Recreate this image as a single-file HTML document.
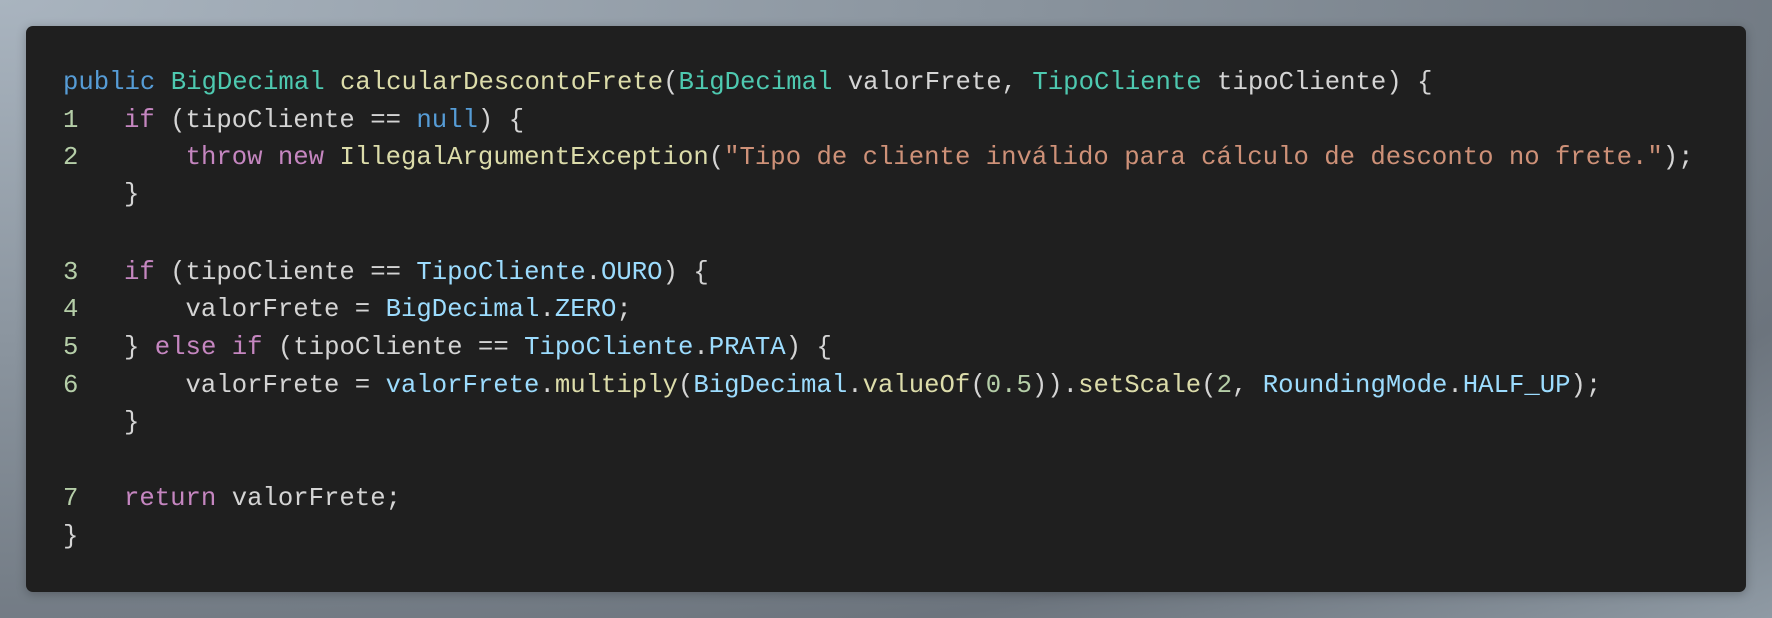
<!DOCTYPE html><html><head><style>
html,body{margin:0;padding:0}
body{width:1772px;height:618px;background:radial-gradient(ellipse at 0% 0%,#a9b4bf 0%,#8a949e 40%,#6c747d 80%,#8f9aa4 100%);position:relative;overflow:hidden;font-family:"Liberation Mono",monospace}
.p{position:absolute;left:26px;top:26px;width:1720px;height:566px;background:#1f1f1f;border-radius:7px;box-shadow:0 2px 10px rgba(0,0,0,.25)}
.l{position:absolute;left:63px;font-size:25.65px;line-height:30px;color:#d4d4d4;white-space:pre}
.n{position:absolute;left:63px;font-size:25.65px;line-height:30px;color:#b5cea8}
.k{color:#c586c0}.b{color:#569cd6}.t{color:#4ec9b0}.f{color:#dcdcaa}.s{color:#ce9178}.v{color:#9cdcfe}.u{color:#b5cea8}
</style></head><body><div class="p"></div>
<div class="l" style="top:68px"><span class="b">public</span> <span class="t">BigDecimal</span> <span class="f">calcularDescontoFrete</span>(<span class="t">BigDecimal</span> valorFrete, <span class="t">TipoCliente</span> tipoCliente) {</div>
<div class="n" style="top:106px">1</div><div class="l" style="top:106px;left:124px"><span class="k">if</span> (tipoCliente == <span class="b">null</span>) {</div>
<div class="n" style="top:143px">2</div><div class="l" style="top:143px;left:124px">    <span class="k">throw</span> <span class="k">new</span> <span class="f">IllegalArgumentException</span>(<span class="s">"Tipo de cliente inválido para cálculo de desconto no frete."</span>);</div>
<div class="l" style="top:180px;left:124px">}</div>
<div class="n" style="top:258px">3</div><div class="l" style="top:258px;left:124px"><span class="k">if</span> (tipoCliente == <span class="v">TipoCliente</span>.<span class="v">OURO</span>) {</div>
<div class="n" style="top:295px">4</div><div class="l" style="top:295px;left:124px">    valorFrete = <span class="v">BigDecimal</span>.<span class="v">ZERO</span>;</div>
<div class="n" style="top:333px">5</div><div class="l" style="top:333px;left:124px">} <span class="k">else</span> <span class="k">if</span> (tipoCliente == <span class="v">TipoCliente</span>.<span class="v">PRATA</span>) {</div>
<div class="n" style="top:371px">6</div><div class="l" style="top:371px;left:124px">    valorFrete = <span class="v">valorFrete</span>.<span class="f">multiply</span>(<span class="v">BigDecimal</span>.<span class="f">valueOf</span>(<span class="u">0.5</span>)).<span class="f">setScale</span>(<span class="u">2</span>, <span class="v">RoundingMode</span>.<span class="v">HALF_UP</span>);</div>
<div class="l" style="top:408px;left:124px">}</div>
<div class="n" style="top:484px">7</div><div class="l" style="top:484px;left:124px"><span class="k">return</span> valorFrete;</div>
<div class="l" style="top:522px">}</div>
</body></html>
